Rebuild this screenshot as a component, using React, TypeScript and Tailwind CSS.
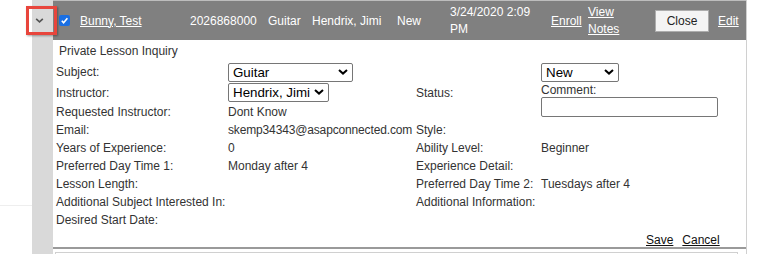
import React from 'react'

function Chevron({ className }: { className?: string }) {
  return (
    <svg viewBox="0 0 10 6" className={className} fill="none" stroke="currentColor" strokeWidth="2">
      <path d="M1 1l4 3.6L9 1" />
    </svg>
  )
}

function FakeSelect({ value, width }: { value: string; width: string }) {
  return (
    <div className={`relative h-[19px] ${width}`}>
      <select
        defaultValue={value}
        className="h-full w-full appearance-none rounded-[2px] border border-[#767676] bg-white pl-[4px] font-['Liberation_Sans',Arial,sans-serif] text-[13.33px] leading-[17px] text-black outline-none"
      >
        <option>{value}</option>
      </select>
      <Chevron className="pointer-events-none absolute right-[5px] top-[6px] h-[6px] w-[10px] text-black" />
    </div>
  )
}

export default function App() {
  const label = 'whitespace-nowrap leading-[18px]'
  return (
    <div className="relative h-[254px] w-[757px] overflow-hidden bg-white font-['Liberation_Sans',Arial,sans-serif] text-[12px] text-[#333]">
      <div className="flex h-full">
        {/* page gutter */}
        <div className="flex w-[32px] shrink-0 flex-col">
          <div className="mt-[205px] h-px shrink-0 bg-[#eeeeee]" />
        </div>
        {/* expander column */}
        <div className="w-[21px] shrink-0 bg-[#d9d9d9]" />

        <div className="flex w-[693px] shrink-0 flex-col">
          {/* header row */}
          <div className="flex h-[40px] shrink-0 items-center border-t border-[#bdbdbd] bg-[#808080] text-white">
            <div className="w-[27px]">
              <span className="ml-[6px] flex h-[11px] w-[11px] items-center justify-center rounded-[2px] bg-[#1a6fe3]">
                <svg viewBox="0 0 10 10" className="h-[9px] w-[9px]" fill="none" stroke="white" strokeWidth="1.8">
                  <path d="M2 5.2l2 2.2L8.2 2.4" />
                </svg>
              </span>
            </div>
            <div className="w-[110px]">
              <a className="underline">Bunny, Test</a>
            </div>
            <div className="w-[78px]">2026868000</div>
            <div className="w-[44px]">Guitar</div>
            <div className="w-[85px]">Hendrix, Jimi</div>
            <div className="w-[53px]">New</div>
            <div className="w-[101px] leading-[17px]">
              3/24/2020 2:09
              <br />
              PM
            </div>
            <div className="w-[37px]">
              <a className="underline">Enroll</a>
            </div>
            <div className="w-[67px] leading-[17px]">
              <a className="underline">
                View
                <br />
                Notes
              </a>
            </div>
            <div className="w-[63px]">
              <button className="h-[22px] w-[54px] border border-[#adadad] bg-[#f4f4f4] text-[12px] text-[#222]">
                Close
              </button>
            </div>
            <div>
              <a className="underline">Edit</a>
            </div>
          </div>

          {/* detail */}
          <div className="shrink-0 pl-[3px]">
            <div className="h-[22px] pl-[3px] leading-[22px]">Private Lesson Inquiry</div>
            <div className="grid grid-cols-[172px_188px_125px_1fr] grid-rows-[20px_21px_18px_18px_18px_18px_18px_18px_18px] items-center">
              <div className={label}>Subject:</div>
              <FakeSelect value="Guitar" width="w-[125px]" />
              <div />
              <FakeSelect value="New" width="w-[78px]" />

              <div className={label}>Instructor:</div>
              <FakeSelect value="Hendrix, Jimi" width="w-[101px]" />
              <div className={label}>Status:</div>
              <div className="row-span-2 self-start pt-[1px]">
                <div className="leading-[14px]">Comment:</div>
                <input className="h-[20px] w-[177px] rounded-[2px] border border-[#767676] bg-white outline-none" />
              </div>

              <div className={label}>Requested Instructor:</div>
              <div className={label}>Dont Know</div>
              <div />

              <div className={label}>Email:</div>
              <div className={`${label} tracking-[-0.15px]`}>skemp34343@asapconnected.com</div>
              <div className={label}>Style:</div>
              <div />

              <div className={label}>Years of Experience:</div>
              <div className={label}>0</div>
              <div className={label}>Ability Level:</div>
              <div className={label}>Beginner</div>

              <div className={label}>Preferred Day Time 1:</div>
              <div className={label}>Monday after 4</div>
              <div className={label}>Experience Detail:</div>
              <div />

              <div className={label}>Lesson Length:</div>
              <div />
              <div className={label}>Preferred Day Time 2:</div>
              <div className={label}>Tuesdays after 4</div>

              <div className={label}>Additional Subject Interested In:</div>
              <div />
              <div className={label}>Additional Information:</div>
              <div />

              <div className={label}>Desired Start Date:</div>
              <div />
              <div />
              <div />
            </div>
          </div>

          <div className="flex h-[18px] shrink-0 items-center gap-[9px] pl-[593px] pt-[3px] text-[#111]">
            <a className="underline">Save</a>
            <a className="underline">Cancel</a>
          </div>
          <div className="h-[2px] shrink-0 bg-[#9a9a9a]" />
          <div className="ml-[2px] mr-[8px] mt-[3px] h-[10px] shrink-0 border border-b-0 border-[#d0d0d0]" />
        </div>

        <div className="w-px shrink-0 bg-[#d0d0d0]" />
      </div>

      {/* expander toggle with highlight */}
      <div className="absolute left-[26px] top-[6px] flex h-[29px] w-[31px] items-center justify-center border-[3px] border-[#e8453c] shadow-[1px_1px_2px_rgba(0,0,0,0.35)]">
        <Chevron className="ml-[-5px] h-[5px] w-[9px] text-[#555]" />
      </div>
    </div>
  )
}
